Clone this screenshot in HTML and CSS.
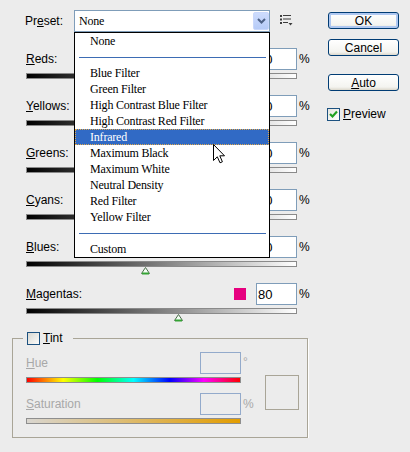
FILE: index.html
```html
<!DOCTYPE html>
<html lang="en">
<head>
    <meta charset="UTF-8">
    <meta name="viewport" content="width=device-width, initial-scale=1.0">
    <title>Black and White</title>
    <link rel="stylesheet" href="styles.css">
</head>
<body>
    <div class="dialog">
        <div class="main">
            <div class="preset-row">
                <span class="preset-label">Pr<u>e</u>set:</span>
                <div class="select">
                    <span class="select-value">None</span>
                    <span class="select-arrow">
                        <svg width="9" height="6" viewBox="0 0 9 6"><path d="M1 1 L4.5 4.5 L8 1" fill="none" stroke="#4d6185" stroke-width="2"/></svg>
                    </span>
                    <ul class="dropdown">
                        <li>None</li>
                        <li class="sep"></li>
                        <li>Blue Filter</li>
                        <li>Green Filter</li>
                        <li>High Contrast Blue Filter</li>
                        <li>High Contrast Red Filter</li>
                        <li class="active">Infrared</li>
                        <li>Maximum Black</li>
                        <li>Maximum White</li>
                        <li>Neutral Density</li>
                        <li>Red Filter</li>
                        <li>Yellow Filter</li>
                        <li class="sep"></li>
                        <li>Custom</li>
                        <!-- mouse pointer hovering the list -->
                        <svg class="pointer" width="13" height="20" viewBox="0 0 13 20"><path d="M0.5 0.5 V16.5 L4.3 12.8 L7 18.8 L9.4 17.8 L6.8 11.8 H11.5 Z" fill="#fff" stroke="#000"/></svg>
                    </ul>
                </div>
                <span class="preset-menu">
                    <svg width="13" height="11" viewBox="0 0 13 11" fill="#3c3c3c">
                        <rect x="0" y="0" width="2" height="2"/><rect x="3" y="0" width="8" height="1"/>
                        <rect x="0" y="3.5" width="2" height="2"/><rect x="3" y="3.5" width="8" height="1"/>
                        <rect x="0" y="7" width="2" height="2"/><rect x="3" y="7" width="5" height="1"/>
                        <path d="M8.5 8 H12.5 L10.5 10.5 Z"/>
                    </svg>
                </span>
            </div>

            <div class="channels">
                <div class="channel">
                    <div class="channel-top"><span class="label"><u>R</u>eds:</span><input class="num" type="text" value="40"></div>
                    <span class="unit">%</span>
                    <div class="slider"><div class="track"></div><span class="thumb" style="left:48%"><svg width="9" height="8" viewBox="0 0 9 8"><path d="M4.5 0.5 L8.5 6.5 H0.5 Z" fill="#f4fff4" stroke="#4c6b4c"/><path d="M1 6.5 H8" stroke="#34a334" stroke-width="2"/></svg></span></div>
                </div>
                <div class="channel">
                    <div class="channel-top"><span class="label"><u>Y</u>ellows:</span><input class="num" type="text" value="60"></div>
                    <span class="unit">%</span>
                    <div class="slider"><div class="track"></div><span class="thumb" style="left:52%"><svg width="9" height="8" viewBox="0 0 9 8"><path d="M4.5 0.5 L8.5 6.5 H0.5 Z" fill="#f4fff4" stroke="#4c6b4c"/><path d="M1 6.5 H8" stroke="#34a334" stroke-width="2"/></svg></span></div>
                </div>
                <div class="channel">
                    <div class="channel-top"><span class="label"><u>G</u>reens:</span><input class="num" type="text" value="40"></div>
                    <span class="unit">%</span>
                    <div class="slider"><div class="track"></div><span class="thumb" style="left:48%"><svg width="9" height="8" viewBox="0 0 9 8"><path d="M4.5 0.5 L8.5 6.5 H0.5 Z" fill="#f4fff4" stroke="#4c6b4c"/><path d="M1 6.5 H8" stroke="#34a334" stroke-width="2"/></svg></span></div>
                </div>
                <div class="channel">
                    <div class="channel-top"><span class="label"><u>C</u>yans:</span><input class="num" type="text" value="60"></div>
                    <span class="unit">%</span>
                    <div class="slider"><div class="track"></div><span class="thumb" style="left:52%"><svg width="9" height="8" viewBox="0 0 9 8"><path d="M4.5 0.5 L8.5 6.5 H0.5 Z" fill="#f4fff4" stroke="#4c6b4c"/><path d="M1 6.5 H8" stroke="#34a334" stroke-width="2"/></svg></span></div>
                </div>
                <div class="channel">
                    <div class="channel-top"><span class="label"><u>B</u>lues:</span><input class="num" type="text" value="20"></div>
                    <span class="unit">%</span>
                    <div class="slider"><div class="track"></div><span class="thumb" style="left:44%"><svg width="9" height="8" viewBox="0 0 9 8"><path d="M4.5 0.5 L8.5 6.5 H0.5 Z" fill="#f4fff4" stroke="#4c6b4c"/><path d="M1 6.5 H8" stroke="#34a334" stroke-width="2"/></svg></span></div>
                </div>
                <div class="channel">
                    <div class="channel-top"><span class="label"><u>M</u>agentas:</span><span class="swatch"></span><input class="num" type="text" value="80"></div>
                    <span class="unit">%</span>
                    <div class="slider"><div class="track"></div><span class="thumb" style="left:56%"><svg width="9" height="8" viewBox="0 0 9 8"><path d="M4.5 0.5 L8.5 6.5 H0.5 Z" fill="#f4fff4" stroke="#4c6b4c"/><path d="M1 6.5 H8" stroke="#34a334" stroke-width="2"/></svg></span></div>
                </div>
            </div>

            <fieldset class="tint">
                <legend><span class="check"></span><span><u>T</u>int</span></legend>
                <div class="tint-controls">
                    <div class="tint-row">
                        <div class="tint-top"><span class="label"><u>H</u>ue</span><span class="num num-off"></span></div>
                        <span class="unit unit-off deg">°</span>
                        <div class="bar hue"></div>
                    </div>
                    <div class="tint-row">
                        <div class="tint-top"><span class="label"><u>S</u>aturation</span><span class="num num-off"></span></div>
                        <span class="unit unit-off">%</span>
                        <div class="bar sat"></div>
                    </div>
                </div>
                <div class="tint-swatch"></div>
            </fieldset>
        </div>

        <div class="side">
            <button class="btn ok">OK</button>
            <button class="btn cancel">Cancel</button>
            <button class="btn auto"><u>A</u>uto</button>
            <label class="preview">
                <span class="check checked">
                    <svg width="11" height="11" viewBox="0 0 11 11"><path d="M2 5 L4.5 7.5 L9 2.5" fill="none" stroke="#21a121" stroke-width="2.2"/></svg>
                </span>
                <span><u>P</u>review</span>
            </label>
        </div>
    </div>
</body>
</html>
```

FILE: styles.css
```css
body {
    margin: 0;
    background: #ececec;
    font-family: "Liberation Sans", Arial, sans-serif;
    font-size: 12px;
    color: #000;
}
.dialog {
    display: grid;
    grid-template-columns: 300px 71px;
    column-gap: 16px;
    padding: 10px 0 0 12px;
}

/* preset row + open dropdown */
.preset-row {
    display: flex;
    align-items: center;
    height: 22px;
    padding-left: 13px;
}
.preset-label {
    width: 49px;
}
.select {
    position: relative;
    display: flex;
    align-items: center;
    box-sizing: border-box;
    width: 196px;
    height: 22px;
    padding: 1px 0 1px 4px;
    border: 1px solid #7f9db9;
    background: #fff;
}
.select-value {
    flex: 1;
    font-family: "Liberation Serif", "Times New Roman", serif;
    font-size: 12px;
    letter-spacing: -0.2px;
}
.select-arrow {
    display: flex;
    align-items: center;
    justify-content: center;
    box-sizing: border-box;
    width: 16px;
    height: 18px;
    border: 1px solid #c9d8fb;
    border-radius: 2px;
    background: linear-gradient(#cddcfd, #b6cbf7);
}
.dropdown {
    position: absolute;
    left: -1px;
    top: 21px;
    z-index: 2;
    box-sizing: border-box;
    width: 196px;
    margin: 0;
    padding: 0;
    list-style: none;
    border: 1px solid #000;
    background: #fff;
    font-family: "Liberation Serif", "Times New Roman", serif;
    font-size: 12px;
    letter-spacing: -0.2px;
}
.dropdown li {
    box-sizing: border-box;
    height: 16px;
    line-height: 16px;
    padding-left: 15px;
    white-space: nowrap;
}
.dropdown li.sep {
    padding: 8px 3px 0 4px;
}
.dropdown li.sep::after {
    content: "";
    display: block;
    border-top: 1px solid #3d6cb4;
}
.dropdown li.active {
    background: #316ac5;
    color: #fff;
    outline: 1px dotted #e0a84c;
    outline-offset: -1px;
}
.pointer {
    position: absolute;
    left: 138px;
    top: 111px;
}
.preset-menu {
    display: flex;
    align-self: flex-start;
    margin: 5px 0 0 10px;
}

/* channel sliders */
.channels {
    margin-top: 16px;
    padding-left: 14px;
}
.channel {
    display: grid;
    grid-template-columns: 271px 14px;
    align-content: start;
    height: 47px;
}
.channel-top {
    display: flex;
    align-items: center;
    height: 22px;
}
.label {
    flex: 1;
}
.num {
    box-sizing: border-box;
    width: 41px;
    height: 22px;
    margin: 0;
    padding: 0 1px;
    border: 1px solid #7f9db9;
    background: #fff;
    font-family: "Liberation Sans", Arial, sans-serif;
    font-size: 13px;
    color: #000;
}
.swatch {
    width: 12px;
    height: 12px;
    margin-right: 10px;
    background: #e6007e;
}
.unit {
    align-self: center;
    padding-left: 2px;
}
.slider {
    position: relative;
    grid-column: 1;
    height: 13px;
    margin-top: 3px;
}
.track {
    box-sizing: border-box;
    height: 6px;
    border: 1px solid #8a8a8a;
    background: linear-gradient(to right, #000, #fff);
}
.thumb {
    position: absolute;
    top: 6px;
    display: flex;
    margin-left: -4px;
}

/* tint group */
.tint {
    display: flex;
    box-sizing: border-box;
    width: 296px;
    min-width: 0;
    margin: 2px 0 0;
    padding: 7px 8px 13px 13px;
    border: 1px solid #a9a597;
    box-shadow: 1px 1px 0 #fff;
}
.tint legend {
    display: flex;
    align-items: center;
    gap: 3px;
    margin-left: -3px;
    padding: 0 10px 0 4px;
    line-height: 13px;
}
.check {
    display: flex;
    align-items: center;
    justify-content: center;
    box-sizing: border-box;
    width: 13px;
    height: 13px;
    border: 1px solid #1c5180;
    background: linear-gradient(135deg, #d8d8d2, #fbfbfa);
}
.check.checked {
    background: linear-gradient(135deg, #e6e6e0, #fff);
}
.tint-controls {
    width: 235px;
}
.tint-row {
    display: grid;
    grid-template-columns: 215px 20px;
}
.tint-row + .tint-row {
    margin-top: 10px;
}
.tint-top {
    display: flex;
    align-items: center;
    height: 22px;
    color: #a8a8a8;
}
.num-off {
    border-color: #93aacb;
    background: transparent;
}
.unit-off {
    color: #a8a8a8;
}
.deg {
    align-self: start;
    margin-top: 3px;
}
.bar {
    grid-column: 1;
    box-sizing: border-box;
    height: 6px;
    margin-top: 3px;
    border: 1px solid #8e8e8e;
}
.hue {
    background: linear-gradient(to right, #f00, #ff0 17%, #0f0 33%, #0ff 50%, #00f 67%, #f0f 83%, #f00);
}
.sat {
    background: linear-gradient(to right, #d9d6d0, #e39d00);
}
.tint-swatch {
    box-sizing: border-box;
    width: 35px;
    height: 35px;
    margin: 23px 0 0 4px;
    border: 1px solid #a9a597;
}

/* buttons column */
.side {
    display: flex;
    flex-direction: column;
    align-items: flex-start;
}
.btn {
    box-sizing: border-box;
    width: 71px;
    height: 17px;
    padding: 0;
    border: 1px solid #003c74;
    border-radius: 3px;
    background: linear-gradient(#fff, #f4f4f0 80%, #dcd8cc);
    font-family: "Liberation Sans", Arial, sans-serif;
    font-size: 12px;
    color: #000;
}
.ok {
    margin-top: 2px;
    box-shadow: inset 0 0 0 2px #afc8f1;
}
.cancel {
    margin-top: 10px;
}
.auto {
    margin-top: 18px;
}
.preview {
    display: flex;
    align-items: center;
    gap: 3px;
    margin: 16px 0 0 -1px;
}
```
